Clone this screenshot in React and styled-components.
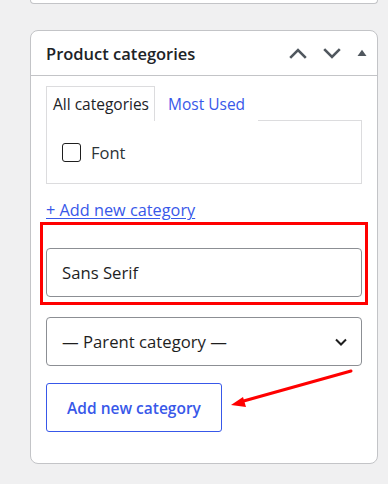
import React from 'react'
import styled, { createGlobalStyle } from 'styled-components'

const GlobalStyle = createGlobalStyle`
  html, body {
    margin: 0;
    padding: 0;
    background: #f0f0f1;
    font-family: "Open Sans", "Noto Sans", sans-serif;
    color: #1e1e1e;
  }
`

const Page = styled.div`
  position: relative;
  width: 388px;
  height: 484px;
  padding: 0 10px 0 30px;
  box-sizing: border-box;
  overflow: hidden;
`

const PrevCard = styled.div`
  height: 4px;
  background: #fff;
  border: 1px solid #c3c4c7;
  border-top: none;
  border-radius: 0 0 8px 8px;
  box-sizing: border-box;
`

const Card = styled.div`
  margin-top: 26px;
  background: #fff;
  border: 1px solid #c3c4c7;
  border-radius: 8px;
`

const Header = styled.div`
  display: flex;
  align-items: center;
  height: 44px;
  padding: 0 10px 0 15px;
  border-bottom: 1px solid #c3c4c7;
`

const Title = styled.h2`
  flex: 1;
  margin: 0;
  font-size: 16.5px;
  font-weight: 600;
  color: #1d2327;
`

const HeaderIcons = styled.div`
  display: flex;
  align-items: center;
  gap: 16px;
`

const Body = styled.div`
  padding: 10px 15px 31px;
`

const Tabs = styled.div`
  display: flex;
  align-items: flex-end;
`

const Tab = styled.div`
  height: 34px;
  display: flex;
  align-items: center;
  padding: 0 ${p => (p.$active ? '5px' : '12px')} 0 ${p => (p.$active ? '6px' : '12px')};
  font-size: 15.5px;
  color: ${p => (p.$active ? '#1d2327' : '#3858e9')};
  background: #fff;
  border: 1px solid ${p => (p.$active ? '#dcdcde' : 'transparent')};
  border-bottom: none;
  margin-bottom: -1px;
  position: relative;
  z-index: 1;
`

const Panel = styled.div`
  border: 1px solid #dcdcde;
  height: 62px;
  display: flex;
  align-items: center;
  padding: 0 15px;
  gap: 10px;
  font-size: 16.5px;
  color: #2c3338;
`

const Checkbox = styled.span`
  width: 17px;
  height: 17px;
  border: 1.5px solid #1e1e1e;
  border-radius: 3px;
  display: inline-block;
`

const AddLink = styled.a`
  display: inline-block;
  margin-top: 15px;
  font-size: 16.3px;
  color: #3858e9;
  text-decoration: underline;
  text-underline-offset: 2px;
`

const Highlight = styled.div`
  margin: 1px -6px 0;
  border: 3px solid #ff0000;
  padding: 23px 3px 5px;
`

const Field = styled.div`
  height: 49px;
  box-sizing: border-box;
  border: 1px solid #8c8f94;
  border-radius: 4px;
  display: flex;
  align-items: center;
  padding: 0 14px 0 15px;
  font-size: 16.7px;
  color: #1e1e1e;
  background: #fff;
  margin-top: ${p => p.$gap || 0}px;
`

const FieldText = styled.span`
  flex: 1;
`

const Button = styled.div`
  margin-top: 17px;
  width: 176px;
  height: 49px;
  box-sizing: border-box;
  border: 1px solid #3858e9;
  border-radius: 3px;
  display: flex;
  align-items: center;
  justify-content: center;
  font-size: 15.5px;
  font-weight: 600;
  color: #3858e9;
`

const Arrow = styled.svg`
  position: absolute;
  left: 0;
  top: 0;
  pointer-events: none;
`

const Chevron = ({ up }) => (
  <svg width="18" height="11" viewBox="0 0 18 11">
    <path
      d={up ? 'M1.2 9.8 L9 2 L16.8 9.8' : 'M1.2 1.2 L9 9 L16.8 1.2'}
      fill="none"
      stroke="#50575e"
      strokeWidth="2.6"
    />
  </svg>
)

export default function App() {
  return (
    <>
      <GlobalStyle />
      <Page>
        <PrevCard />
        <Card>
          <Header>
            <Title>Product categories</Title>
            <HeaderIcons>
              <Chevron up />
              <Chevron />
              <svg width="10" height="8" viewBox="0 0 10 8">
                <path d="M0.5 7 L5 0.8 L9.5 7 Z" fill="#50575e" />
              </svg>
            </HeaderIcons>
          </Header>
          <Body>
            <Tabs>
              <Tab $active>All categories</Tab>
              <Tab>Most Used</Tab>
            </Tabs>
            <Panel>
              <Checkbox />
              Font
            </Panel>
            <AddLink>+ Add new category</AddLink>
            <Highlight>
              <Field>Sans Serif</Field>
            </Highlight>
            <Field $gap={12}>
              <FieldText>— Parent category —</FieldText>
              <svg width="12" height="8" viewBox="0 0 12 8">
                <path d="M1 1.5 L6 6.5 L11 1.5" fill="none" stroke="#1e1e1e" strokeWidth="2" />
              </svg>
            </Field>
            <Button>Add new category</Button>
          </Body>
        </Card>
        <Arrow width="388" height="484">
          <line x1="351" y1="371" x2="240" y2="402" stroke="#f00" strokeWidth="3" strokeLinecap="round" />
          <path d="M231 405 L243 397 L246 407 Z" fill="#f00" />
        </Arrow>
      </Page>
    </>
  )
}
